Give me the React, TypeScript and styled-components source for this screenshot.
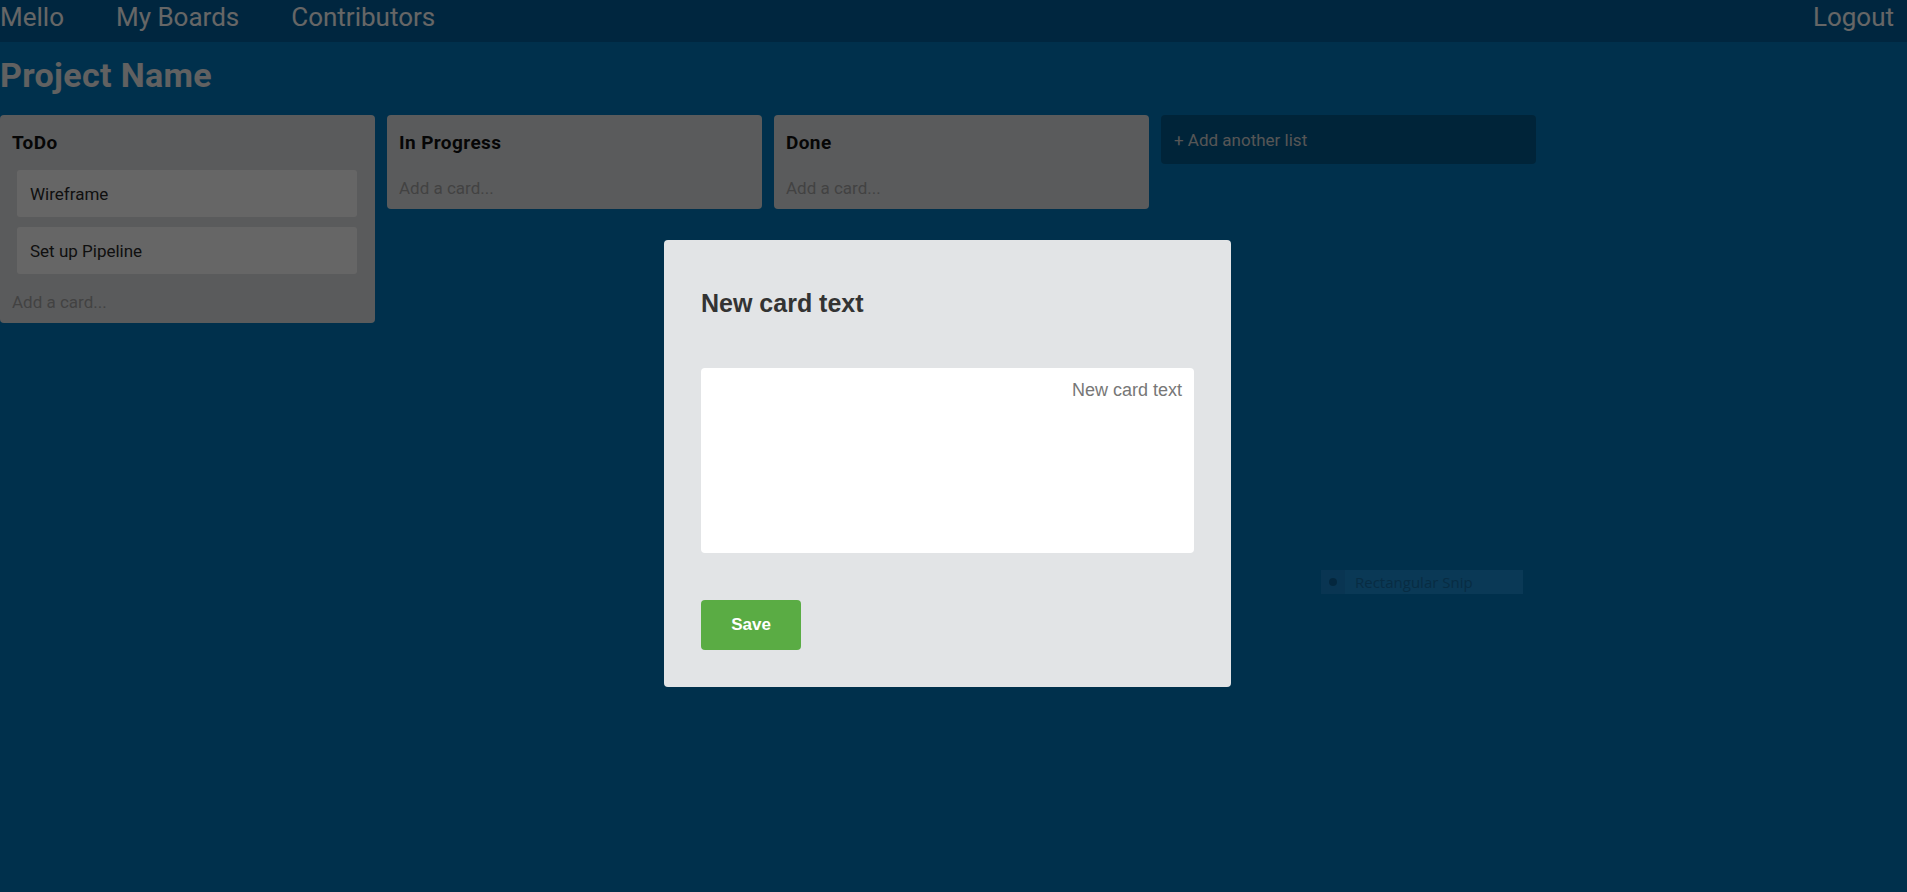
import React from "react";
import styled, { createGlobalStyle } from "styled-components";

const GlobalStyle = createGlobalStyle`
  html, body {
    margin: 0;
    padding: 0;
    background: #0079bf;
    font-family: Roboto, "Noto Sans", sans-serif;
  }
  * { box-sizing: border-box; }
`;

const Page = styled.div`
  min-height: 100vh;
  background: #0079bf;
`;

const NavBar = styled.nav`
  height: 42px;
  padding: 2px 13px 0 0;
  display: flex;
  justify-content: space-between;
  align-items: flex-start;
  background: #005f9d;
`;

const NavGroup = styled.div`
  display: flex;
  gap: 52px;
`;

const NavLink = styled.a`
  font-size: 26px;
  line-height: 30px;
  color: #ffffff;
  text-decoration: none;
  cursor: pointer;
`;

const BoardTitle = styled.h1`
  margin: 14px 0 21px;
  font-size: 34px;
  line-height: 38px;
  font-weight: 700;
  letter-spacing: 0.01em;
  color: #f2f2f2;
`;

const ListsRow = styled.div`
  display: flex;
  align-items: flex-start;
  gap: 12px;
`;

const ListColumn = styled.section`
  width: 375px;
  flex: none;
  padding: 16px 12px 11px;
  background: #e2e4e6;
  border-radius: 4px;
`;

const ListTitle = styled.h3`
  margin: 0 0 15px;
  font-size: 19px;
  line-height: 24px;
  font-weight: 700;
  letter-spacing: 0.4px;
  color: #111;
`;

const CardStack = styled.div`
  display: flex;
  flex-direction: column;
  margin-bottom: 8px;
`;

const Card = styled.div`
  margin: 0 6px 10px 5px;
  padding: 14px 13px 13px;
  background: #ffffff;
  border-radius: 3px;
  font-size: 17px;
  line-height: 20px;
  color: #2a2a2a;
`;

const AddCard = styled.div`
  font-size: 17px;
  line-height: 20px;
  color: #a6a6a6;
  cursor: pointer;
`;

const AddList = styled.div`
  width: 375px;
  flex: none;
  height: 49px;
  padding: 15px 13px 14px;
  border-radius: 4px;
  background: rgba(0, 0, 0, 0.25);
  font-size: 17px;
  line-height: 20px;
  color: #d6d6d6;
  cursor: pointer;
`;

const SnipBadge = styled.div`
  position: absolute;
  left: 1321px;
  top: 570px;
  width: 202px;
  height: 24px;
  display: flex;
  align-items: center;
  background: #1a8ed6;
  font-family: "Open Sans", "Noto Sans", sans-serif;
  font-size: 15px;
  color: #136ea8;
`;

const SnipDotCell = styled.span`
  width: 24px;
  height: 24px;
  display: flex;
  align-items: center;
  justify-content: center;
  background: #1786cc;
  margin-right: 10px;
  &::before {
    content: "";
    width: 8px;
    height: 8px;
    border-radius: 50%;
    background: #0c639b;
  }
`;

const Overlay = styled.div`
  position: fixed;
  inset: 0;
  background: rgba(0, 0, 0, 0.6);
  display: flex;
  justify-content: center;
  align-items: flex-start;
  padding: 240px 12px 0 0;
`;

const Modal = styled.div`
  width: 567px;
  padding: 37px;
  background: #e2e4e6;
  border-radius: 4px;
  font-family: "Liberation Sans", Arial, sans-serif;
`;

const ModalTitle = styled.h2`
  margin: 12px 0 51px;
  font-size: 25px;
  line-height: 28px;
  font-weight: 700;
  color: #333;
`;

const CardTextArea = styled.textarea`
  display: block;
  width: 100%;
  height: 185px;
  margin: 0 0 47px;
  padding: 12px;
  border: none;
  border-radius: 4px;
  background: #fff;
  resize: none;
  outline: none;
  text-align: right;
  font-family: "Liberation Sans", Arial, sans-serif;
  font-size: 18px;
  line-height: 21px;
  color: #333;
  &::placeholder {
    color: #777;
  }
`;

const SaveButton = styled.button`
  width: 100px;
  height: 50px;
  border: none;
  border-radius: 4px;
  background: #5aac44;
  color: #fff;
  font-family: "Liberation Sans", Arial, sans-serif;
  font-size: 17px;
  font-weight: 700;
  cursor: pointer;
`;

type ListData = { title: string; cards: string[] };

const lists: ListData[] = [
  { title: "ToDo", cards: ["Wireframe", "Set up Pipeline"] },
  { title: "In Progress", cards: [] },
  { title: "Done", cards: [] },
];

export default function App() {
  return (
    <>
      <GlobalStyle />
      <Page>
        <NavBar>
          <NavGroup>
            <NavLink>Mello</NavLink>
            <NavLink>My Boards</NavLink>
            <NavLink>Contributors</NavLink>
          </NavGroup>
          <NavLink>Logout</NavLink>
        </NavBar>
        <BoardTitle>Project Name</BoardTitle>
        <ListsRow>
          {lists.map((list) => (
            <ListColumn key={list.title}>
              <ListTitle>{list.title}</ListTitle>
              <CardStack>
                {list.cards.map((c) => (
                  <Card key={c}>{c}</Card>
                ))}
              </CardStack>
              <AddCard>Add a card...</AddCard>
            </ListColumn>
          ))}
          <AddList>+ Add another list</AddList>
        </ListsRow>
        <SnipBadge>
          <SnipDotCell />
          Rectangular Snip
        </SnipBadge>
        <Overlay>
          <Modal>
            <ModalTitle>New card text</ModalTitle>
            <CardTextArea placeholder="New card text" />
            <SaveButton>Save</SaveButton>
          </Modal>
        </Overlay>
      </Page>
    </>
  );
}
